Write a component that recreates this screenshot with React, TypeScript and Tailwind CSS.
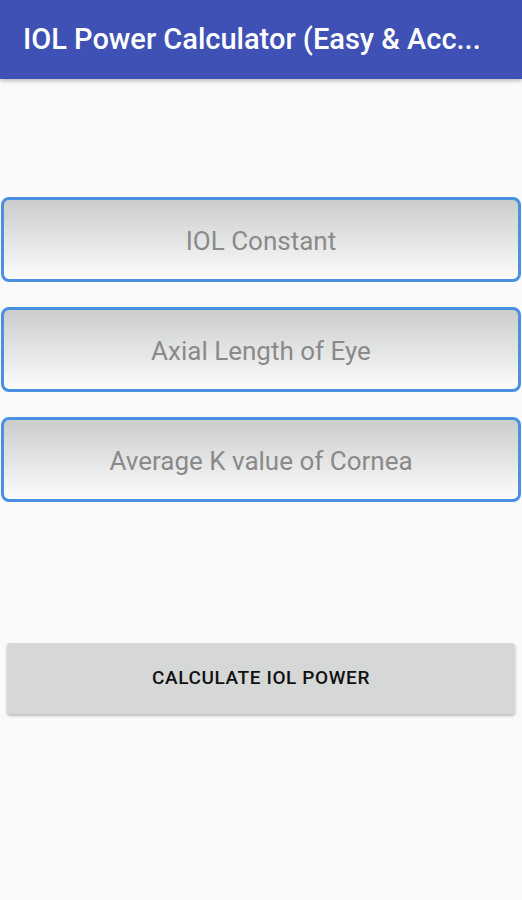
import React from "react";

export default function App() {
  const fields = ["IOL Constant", "Axial Length of Eye", "Average K value of Cornea"];
  return (
    <div className="w-[522px] h-[900px] bg-[#fafafa] flex flex-col" style={{ fontFamily: "Roboto, 'Noto Sans', sans-serif" }}>
      <div className="h-[79px] bg-[#3f51b5] flex items-center pl-[23px] shadow-[0_2px_4px_rgba(0,0,0,0.25)] shrink-0">
        <span className="text-white text-[29px] font-medium">IOL Power Calculator (Easy &amp; Acc...</span>
      </div>
      <div className="flex flex-col gap-[25px] px-[1px] pt-[118px]">
        {fields.map((f) => (
          <div
            key={f}
            className="h-[85px] rounded-[8px] border-[3px] border-[#4a90e2] bg-gradient-to-b from-[#cbcccc] to-[#fcfcfc] flex items-center justify-center pt-[3px]"
          >
            <span className="text-[#8a8a8a] text-[26px]">{f}</span>
          </div>
        ))}
      </div>
      <div className="px-[7px] pt-[141px]">
        <div className="h-[71px] bg-[#d6d7d7] rounded-[3px] shadow-[0_2px_3px_rgba(0,0,0,0.25)] flex items-center justify-center">
          <span className="text-[#111] text-[19px] font-medium tracking-[0.6px]">CALCULATE IOL POWER</span>
        </div>
      </div>
    </div>
  );
}
